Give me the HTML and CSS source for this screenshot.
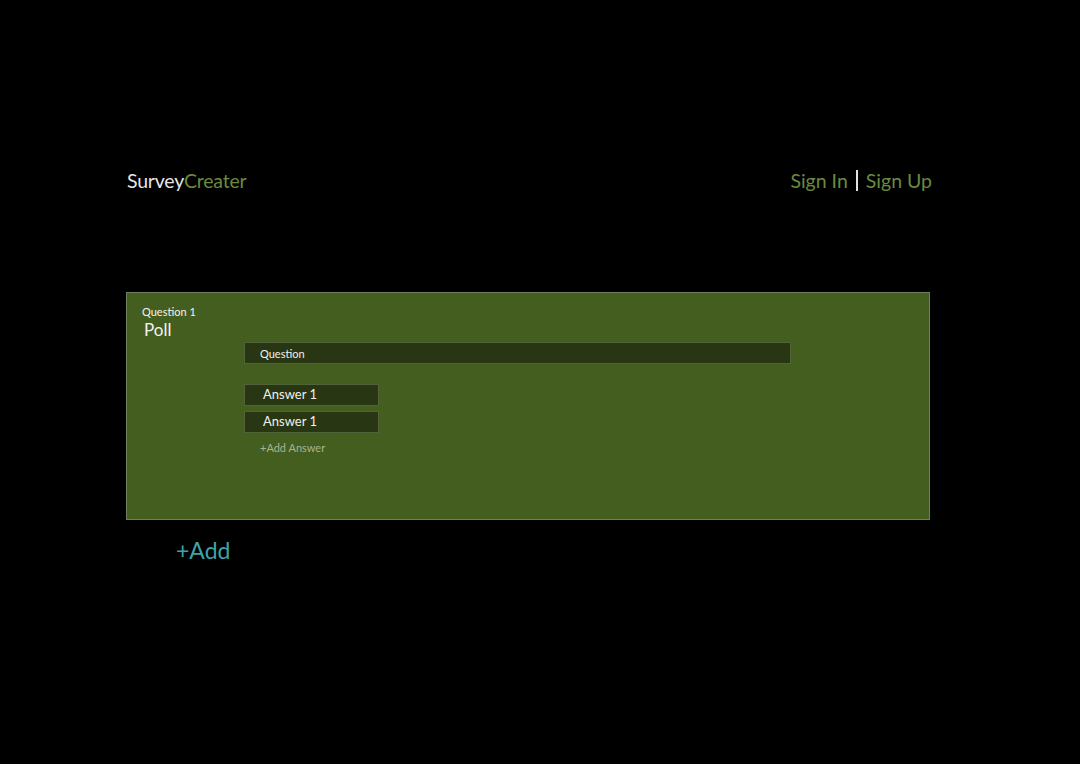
FILE: index.html
```html
<!DOCTYPE html>
<html>
<head>
<meta charset="utf-8">
<link rel="stylesheet" href="styles.css">
</head>
<body>
<div class="page">
  <header class="header">
    <div class="logo">Survey<span class="logo-accent">Creater</span></div>
    <nav class="auth"><a class="auth-link">Sign In</a><span class="sep"></span><a class="auth-link">Sign Up</a></nav>
  </header>
  <section class="card">
    <div class="card-head">
      <div class="q-num">Question 1</div>
      <div class="q-type">Poll</div>
    </div>
    <div class="card-body">
      <div class="field field-question">Question</div>
      <div class="answers">
        <div class="field field-answer">Answer 1</div>
        <div class="field field-answer">Answer 1</div>
        <div class="add-answer">+Add Answer</div>
      </div>
    </div>
  </section>
  <div class="add">+Add</div>
</div>
</body>
</html>
```
FILE: styles.css
```css
html, body {
  margin: 0;
  padding: 0;
  background: #000;
}
body {
  font-family: Lato, "Open Sans", sans-serif;
  color: #e8e8e8;
}
.page {
  width: 806px;
  margin-left: 126px;
  padding-top: 166px;
}
.header {
  display: flex;
  justify-content: space-between;
  align-items: center;
  height: 28px;
}
.logo {
  font-size: 19.5px;
  color: #e6e6e6;
  letter-spacing: -0.2px;
  padding-left: 1px;
}
.logo-accent {
  color: #6b8a3e;
}
.auth {
  display: flex;
  align-items: center;
  font-size: 19.5px;
  color: #6b8a3e;
}
.sep {
  display: inline-block;
  width: 2px;
  height: 21px;
  background: #e0e0e0;
  margin: 0 8px;
}
.card {
  margin-top: 98px;
  width: 802px;
  height: 226px;
  background: #445e1f;
  border: 1px solid #6e7f5c;
  display: flex;
  flex-direction: column;
}
.card-head {
  padding: 12px 0 0 15px;
}
.q-num {
  font-size: 11px;
  line-height: 14px;
  color: #f2f2f2;
}
.q-type {
  font-size: 17px;
  line-height: 20px;
  color: #f2f2f2;
  margin-left: 2px;
  margin-top: 1px;
}
.card-body {
  padding-left: 117px;
  padding-top: 2px;
}
.field {
  background: #283613;
  border: 1px solid #51633a;
  box-sizing: border-box;
  color: #f0f0f0;
}
.field-question {
  width: 547px;
  height: 22px;
  font-size: 11px;
  line-height: 21px;
  padding-left: 15px;
}
.answers {
  margin-top: 20px;
  display: flex;
  flex-direction: column;
  gap: 5px;
}
.field-answer {
  width: 135px;
  height: 22px;
  font-size: 13px;
  line-height: 19px;
  padding-left: 18px;
}
.add-answer {
  font-size: 11px;
  color: #a7b395;
  padding-left: 16px;
  margin-top: 3px;
}
.add {
  margin-top: 16px;
  margin-left: 50px;
  font-size: 23px;
  color: #3fa3a6;
}
```
